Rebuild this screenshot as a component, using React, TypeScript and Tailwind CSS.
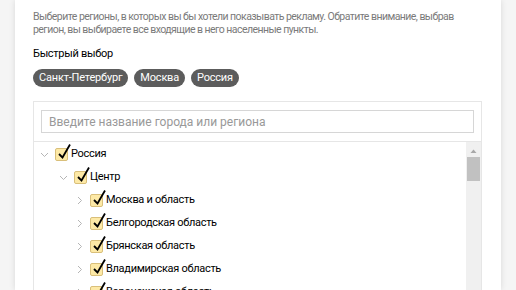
import type { ReactNode } from "react";

type Node = {
  name: string;
  level: number;
  open?: boolean;
};

const quickPicks = ["Санкт-Петербург", "Москва", "Россия"];

const nodes: Node[] = [
  { name: "Россия", level: 0, open: true },
  { name: "Центр", level: 1, open: true },
  { name: "Москва и область", level: 2 },
  { name: "Белгородская область", level: 2 },
  { name: "Брянская область", level: 2 },
  { name: "Владимирская область", level: 2 },
  { name: "Воронежская область", level: 2 },
];

const indent = ["pl-[6px]", "pl-[25px]", "pl-[41px]"];

function Chevron({ open }: { open?: boolean }) {
  return (
    <svg width="9" height="9" viewBox="0 0 9 9" className="shrink-0">
      {open ? (
        <path d="M1 3 L4.5 6.5 L8 3" fill="none" stroke="#b5b5b5" strokeWidth="1" />
      ) : (
        <path d="M3 1 L6.5 4.5 L3 8" fill="none" stroke="#b5b5b5" strokeWidth="1" />
      )}
    </svg>
  );
}

function Checkbox() {
  return (
    <span className="relative block h-[13px] w-[13px] shrink-0 rounded-[2px] border border-[#d9bf7a] bg-[#fde9a6]">
      <svg
        width="16"
        height="18"
        viewBox="0 0 16 18"
        className="absolute left-[1px] top-[-6px]"
      >
        <path d="M2 11 L5.5 14.5 L13 1.5" fill="none" stroke="#000" strokeWidth="1.8" />
      </svg>
    </span>
  );
}

function Row({ node }: { node: Node }) {
  return (
    <div className={`flex h-[23px] items-center ${indent[node.level]}`}>
      <Chevron open={node.open} />
      <span className="ml-[6px]">
        <Checkbox />
      </span>
      <span className="ml-[3px] text-[11px] tracking-[-0.3px] whitespace-nowrap text-black">
        {node.name}
      </span>
    </div>
  );
}

function Panel({ children }: { children: ReactNode }) {
  return (
    <div className="mx-[15px] h-full bg-white px-[18px] shadow-[0_0_6px_rgba(0,0,0,0.12)]">
      {children}
    </div>
  );
}

export default function App() {
  return (
    <div
      className="h-[290px] w-[516px] overflow-hidden bg-[#f5f5f5]"
      style={{ fontFamily: "Roboto, 'Liberation Sans', Arial, sans-serif" }}
    >
      <Panel>
        <p className="pt-[10px] text-[10.5px] leading-[13px] tracking-[-0.55px] whitespace-nowrap text-[#7a7a7a]">
          Выберите регионы, в которых вы бы хотели показывать рекламу. Обратите внимание, выбрав
          <br />
          регион, вы выбираете все входящие в него населенные пункты.
        </p>
        <p className="mt-[11px] text-[11px] leading-[14px] tracking-[-0.3px] text-black">
          Быстрый выбор
        </p>
        <div className="mt-[8px] flex gap-[6px]">
          {quickPicks.map((pick) => (
            <span
              key={pick}
              className="flex h-[18px] items-center rounded-full bg-[#5c5c5c] px-[6px] text-[11px] tracking-[-0.2px] text-white"
            >
              {pick}
            </span>
          ))}
        </div>
        <div className="mt-[14px] w-[449px] border border-[#e6e6e6]">
          <div className="border-b border-[#e6e6e6] px-[7px] pb-[8px] pt-[8px]">
            <div className="flex h-[23px] items-center border border-[#d6d6d6] px-[7px] text-[12px] text-[#999]">
              Введите название города или региона
            </div>
          </div>
          <div className="flex">
            <div className="mt-[1px] flex-1">
              {nodes.map((node) => (
                <Row key={node.name} node={node} />
              ))}
            </div>
            <div className="w-[15px] bg-[#f0f0f0]">
              <svg width="15" height="13" viewBox="0 0 15 13" className="mt-[2px]">
                <path d="M4.5 9 L7.5 5.5 L10.5 9 Z" fill="#a8a8a8" />
              </svg>
              <div className="mx-[1px] h-[24px] bg-[#c1c1c1]" />
            </div>
          </div>
        </div>
      </Panel>
    </div>
  );
}
